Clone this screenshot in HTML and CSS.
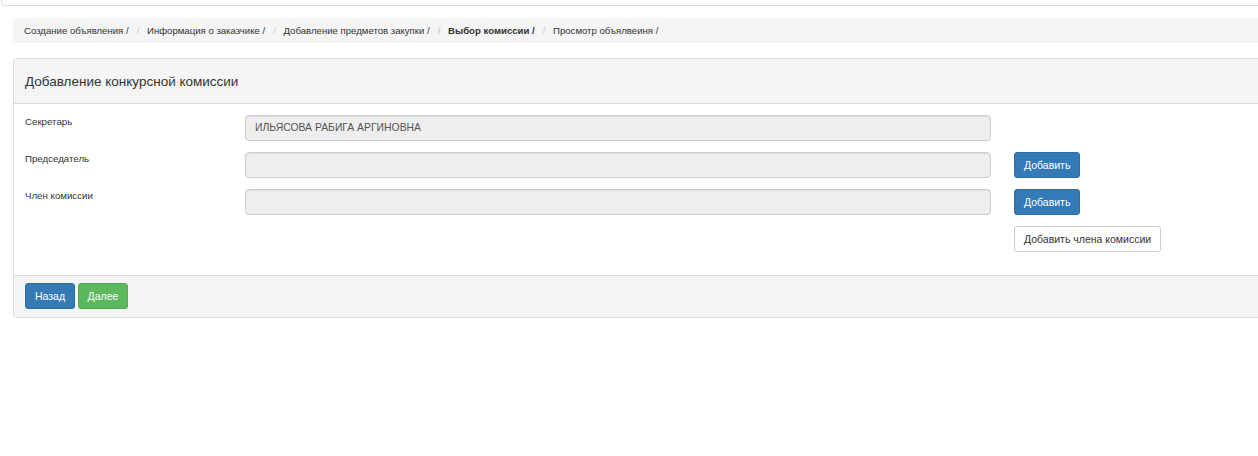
FILE: index.html
```html
<!DOCTYPE html>
<html lang="ru">
<head>
<meta charset="utf-8">
<title>Добавление конкурсной комиссии</title>
<link rel="stylesheet" href="styles.css">
</head>
<body>
<div class="topbar"></div>
<div class="page">
  <ol class="breadcrumb">
    <li>Создание объявления /</li>
    <li>Информация о заказчике /</li>
    <li>Добавление предметов закупки /</li>
    <li class="active">Выбор комиссии /</li>
    <li>Просмотр объялвеиня /</li>
  </ol>

  <div class="panel">
    <div class="panel-heading">Добавление конкурсной комиссии</div>
    <div class="panel-body">
      <div class="form-row">
        <label class="form-label">Секретарь</label>
        <div class="form-input">ИЛЬЯСОВА РАБИГА АРГИНОВНА</div>
        <div class="form-action"></div>
      </div>
      <div class="form-row">
        <label class="form-label">Председатель</label>
        <div class="form-input"></div>
        <div class="form-action"><button class="btn btn-primary">Добавить</button></div>
      </div>
      <div class="form-row">
        <label class="form-label">Член комиссии</label>
        <div class="form-input"></div>
        <div class="form-action"><button class="btn btn-primary">Добавить</button></div>
      </div>
      <div class="form-row">
        <div class="form-label"></div>
        <div class="form-spacer"></div>
        <div class="form-action"><button class="btn btn-default">Добавить члена комиссии</button></div>
      </div>
    </div>
    <div class="panel-footer">
      <button class="btn btn-primary btn-nav">Назад</button>
      <button class="btn btn-success btn-nav">Далее</button>
    </div>
  </div>
</div>
</body>
</html>
```

FILE: styles.css
```css
html, body {
  margin: 0;
  padding: 0;
  overflow: hidden;
  background: #fff;
}

body {
  font-family: "Liberation Sans", Arial, sans-serif;
  color: #333;
  width: 1258px;
}

.topbar {
  width: 1290px;
  height: 5px;
  margin-left: 1px;
  border: 1px solid #ddd;
  border-top: none;
  border-radius: 0 0 0 4px;
  background: #fff;
}

.page {
  width: 1260px;
  padding-left: 13px;
  padding-top: 12px;
}

.breadcrumb {
  display: flex;
  align-items: center;
  list-style: none;
  margin: 0;
  padding: 0 11px;
  height: 25px;
  width: 1270px;
  background: #f5f5f5;
  border-radius: 4px;
  font-size: 9.6px;
  color: #333;
}

.breadcrumb li + li::before {
  content: "/\00a0";
  color: #ccc;
  padding: 0 5px;
  margin-left: 3px;
}

.breadcrumb .active {
  font-weight: bold;
}

.panel {
  margin-top: 15px;
  width: 1270px;
  border: 1px solid #ddd;
  border-radius: 4px;
  background: #fff;
}

.panel-heading {
  height: 44px;
  display: flex;
  align-items: center;
  padding: 0 11px;
  background: #f5f5f5;
  border-bottom: 1px solid #ddd;
  border-radius: 3px 3px 0 0;
  font-size: 13.5px;
  color: #333;
}

.panel-body {
  padding: 11px 11px 23px;
  display: flex;
  flex-direction: column;
  gap: 11px;
}

.form-row {
  display: flex;
  align-items: flex-start;
}

.form-label {
  width: 220px;
  flex: none;
  font-size: 9.7px;
  line-height: 14px;
  color: #333;
}

.form-input,
.form-spacer {
  width: 746px;
  flex: none;
  height: 26px;
  box-sizing: border-box;
}

.form-input {
  background: #eee;
  border: 1px solid #ccc;
  border-radius: 4px;
  box-shadow: inset 0 1px 1px rgba(0, 0, 0, 0.075);
  padding: 0 9px;
  font-size: 10.4px;
  line-height: 24px;
  color: #555;
}

.form-action {
  margin-left: 23px;
  min-height: 26px;
}

.btn {
  display: inline-block;
  box-sizing: border-box;
  height: 26px;
  padding: 0 9px;
  font-family: "Liberation Sans", Arial, sans-serif;
  font-size: 10.5px;
  line-height: 24px;
  border: 1px solid transparent;
  border-radius: 3px;
  cursor: pointer;
  margin: 0;
}

.btn-primary {
  color: #fff;
  background: #337ab7;
  border-color: #2e6da4;
}

.btn-success {
  color: #fff;
  background: #5cb85c;
  border-color: #4cae4c;
}

.btn-default {
  color: #333;
  background: #fff;
  border-color: #ccc;
}

.panel-footer {
  height: 42px;
  box-sizing: border-box;
  padding: 7px 11px 0;
  background: #f5f5f5;
  border-top: 1px solid #ddd;
  border-radius: 0 0 3px 3px;
  display: flex;
  align-items: flex-start;
  gap: 3px;
}

.btn-nav {
  width: 50px;
  padding: 0;
  text-align: center;
}
```
